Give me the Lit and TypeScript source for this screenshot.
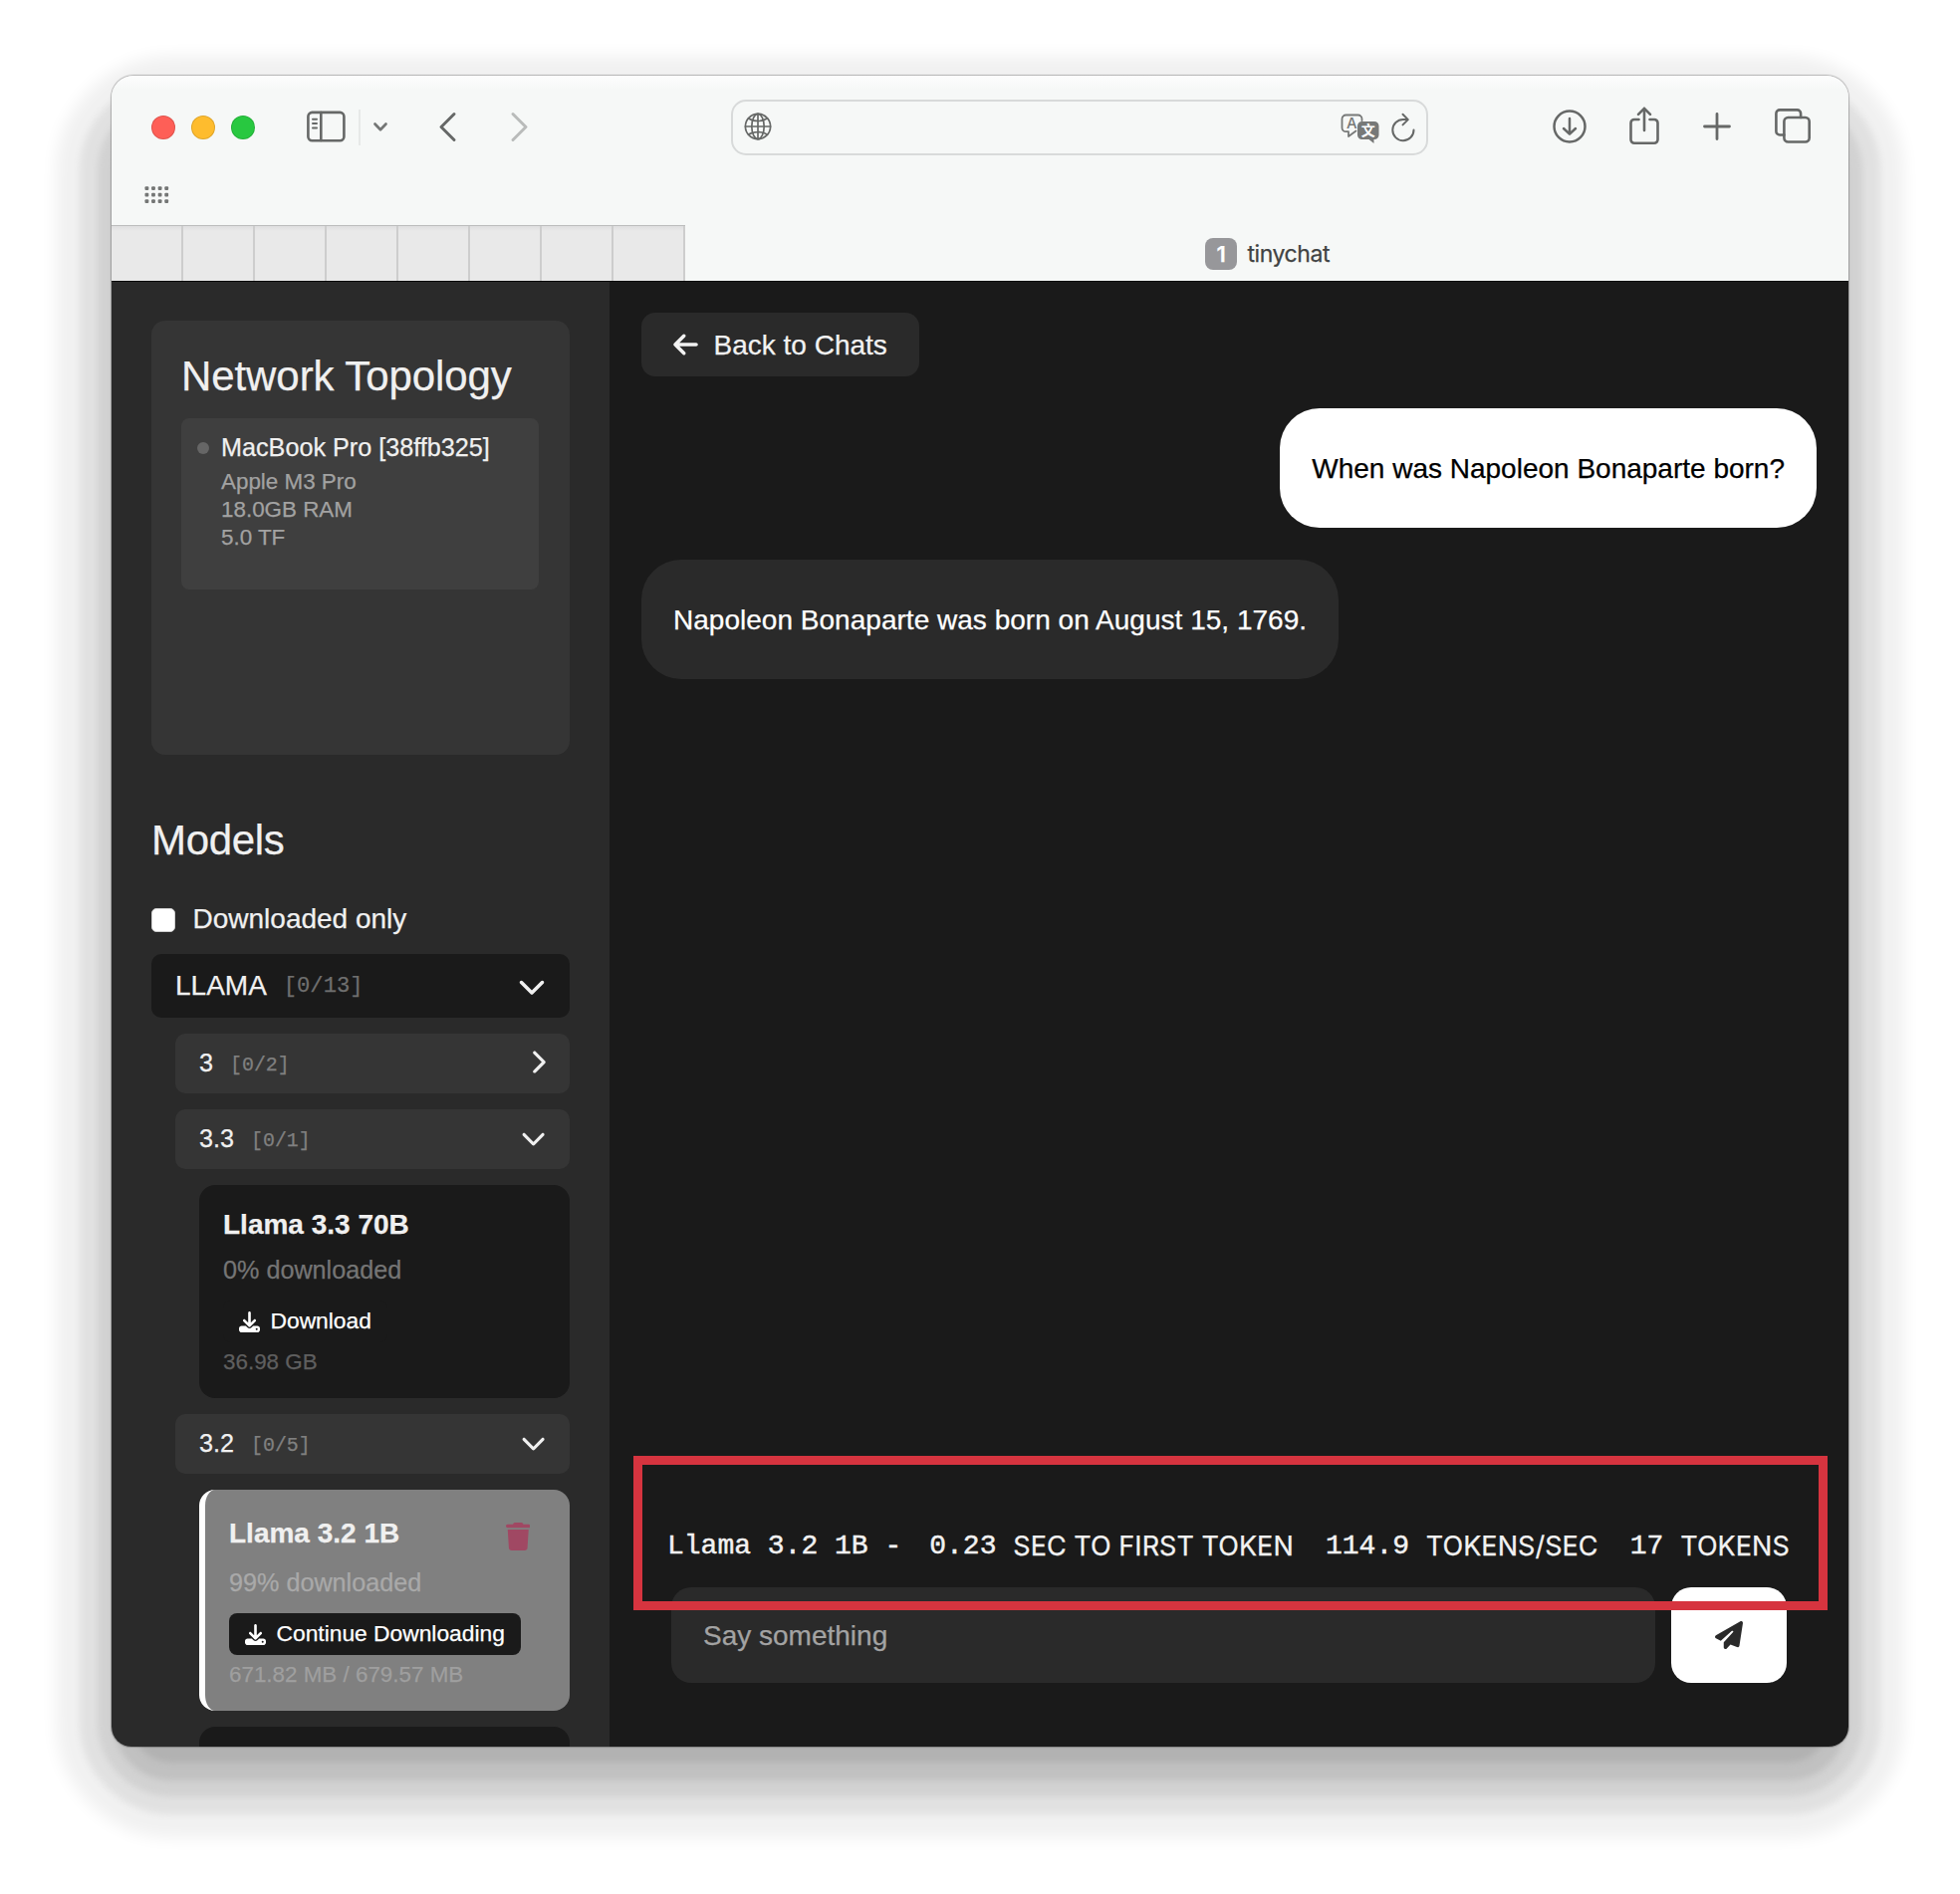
import { LitElement, html, css, svg, nothing } from "lit";
import { customElement, property } from "lit/decorators.js";

/* Solid glyphs used inside the chat page: [viewBox, path] */
const GLYPHS: Record<string, [string, string]> = {
  arrowLeft: ["0 0 448 512", "M9.4 233.4c-12.5 12.5-12.5 32.8 0 45.3l160 160c12.5 12.5 32.8 12.5 45.3 0s12.5-32.8 0-45.3L109.2 288 416 288c17.7 0 32-14.3 32-32s-14.3-32-32-32l-306.7 0L214.6 118.6c12.5-12.5 12.5-32.8 0-45.3s-32.8-12.5-45.3 0l-160 160z"],
  down: ["0 0 512 512", "M233.4 406.6c12.5 12.5 32.8 12.5 45.3 0l192-192c12.5-12.5 12.5-32.8 0-45.3s-32.8-12.5-45.3 0L256 338.7 86.6 169.4c-12.5-12.5-32.8-12.5-45.3 0s-12.5 32.8 0 45.3l192 192z"],
  right: ["0 0 320 512", "M310.6 233.4c12.5 12.5 12.5 32.8 0 45.3l-192 192c-12.5 12.5-32.8 12.5-45.3 0s-12.5-32.8 0-45.3L242.7 256 73.4 86.6c-12.5-12.5-12.5-32.8 0-45.3s32.8-12.5 45.3 0l192 192z"],
  download: ["0 0 512 512", "M288 32c0-17.7-14.3-32-32-32s-32 14.3-32 32V274.7l-73.4-73.4c-12.5-12.5-32.8-12.5-45.3 0s-12.5 32.8 0 45.3l128 128c12.5 12.5 32.8 12.5 45.3 0l128-128c12.5-12.5 12.5-32.8 0-45.3s-32.8-12.5-45.3 0L288 274.7V32zM64 352c-35.3 0-64 28.7-64 64v32c0 35.3 28.7 64 64 64H448c35.3 0 64-28.7 64-64V416c0-35.3-28.7-64-64-64H346.5l-45.3 45.3c-25 25-65.5 25-90.5 0L165.5 352H64zm368 56a24 24 0 1 1 0 48 24 24 0 1 1 0-48z"],
  trash: ["0 0 448 512", "M135.2 17.7L128 32H32C14.3 32 0 46.3 0 64S14.3 96 32 96H416c17.7 0 32-14.3 32-32s-14.3-32-32-32H320l-7.2-14.3C307.4 6.8 296.3 0 284.2 0H163.8c-12.1 0-23.2 6.8-28.6 17.7zM416 128H32L53.2 467c1.6 25.3 22.6 45 47.9 45H346.9c25.3 0 46.3-19.7 47.9-45L416 128z"],
  plane: ["0 0 512 512", "M498.1 5.6c10.1 7 15.4 19.1 13.5 31.2l-64 416c-1.5 9.7-7.4 18.2-16 23s-18.9 5.4-28 1.6L284 427.7l-68.5 74.1c-8.9 9.7-22.9 12.9-35.2 8.1S160 493.2 160 480V396.4c0-4 1.5-7.8 4.2-10.7L331.8 202.8c5.8-6.3 5.6-16-.4-22s-15.7-6.4-22-.7L106 360.8 17.7 316.6C7.1 311.3 .3 300.7 0 288.9s5.9-22.8 16.1-28.7l448-256c10.7-6.1 23.9-5.5 34 1.4z"],
};

const glyph = (name: string, cls: string) => html`
  <svg class=${cls} viewBox=${GLYPHS[name][0]} fill="currentColor"><path d=${GLYPHS[name][1]}></path></svg>`;

@customElement("browser-chrome")
class BrowserChrome extends LitElement {
  static styles = css`
    :host { display: block; height: 206px; background: linear-gradient(#fdfdfd, #f6f8f7 14px); font-family: Inter, "Liberation Sans", sans-serif; }
    svg { display: block; flex: none; fill: none; stroke: #666867; stroke-linecap: round; stroke-linejoin: round; overflow: visible; }
    .toolbar { display: flex; align-items: center; height: 104px; padding: 0 38px 0 40px; }
    .lights { display: flex; gap: 16px; margin-right: 52px; }
    .light { width: 24px; height: 24px; border-radius: 50%; box-sizing: border-box; border: 1px solid rgba(0, 0, 0, 0.12); }
    .red { background: #fe5f57; }
    .amber { background: #febc2e; }
    .green { background: #28c840; }
    .sep { width: 2px; height: 36px; background: #e7e9e8; margin: 0 13px; }
    .side { width: 39px; height: 32px; margin-top: -2px; stroke-width: 2.6; }
    .caret { width: 14px; height: 9px; stroke-width: 2.7; stroke: #747675; margin-top: -1px; }
    .back { width: 17px; height: 29px; margin: -2px 0 0 52px; stroke-width: 3; }
    .fwd { width: 17px; height: 29px; margin: -2px 0 0 55px; stroke-width: 3; stroke: #b9bbba; }
    .url { display: flex; align-items: center; box-sizing: border-box; width: 700px; height: 56px; margin-left: 204px; padding: 0 11px 0 11px; border: 2px solid #d8dada; border-radius: 15px; }
    .globe { width: 28px; height: 28px; margin-right: auto; margin-top: -2px; stroke-width: 1.7; }
    .translate { width: 39px; height: 30px; margin-right: 12px; margin-top: 1px; }
    .reload { width: 24px; height: 28px; margin-top: 0; stroke-width: 2; }
    .dl { width: 34px; height: 34px; margin-left: auto; margin-top: -2px; stroke-width: 2.5; }
    .share { width: 30px; height: 38px; margin-left: 43px; margin-top: -4px; stroke-width: 2.6; }
    .plus { width: 28px; height: 28px; margin-left: 44px; margin-top: -3px; stroke-width: 2.8; }
    .tabs { width: 36px; height: 35px; margin-left: 44px; margin-top: -3px; stroke-width: 2.6; }
    .favs { height: 46px; box-sizing: border-box; padding: 7px 0 0 33px; }
    .dots { width: 25px; height: 18px; fill: #747675; stroke: none; }
    .strip { display: flex; height: 56px; }
    .pinned { display: flex; width: 576px; box-sizing: border-box; background: linear-gradient(#dededf, #e9e9e9 5px); border-top: 1px solid #bcbdbd; }
    .pin { width: 72px; box-sizing: border-box; border-right: 2px solid #cdcdcd; }
    .active { flex: 1; display: flex; align-items: center; justify-content: center; gap: 10.5px; padding: 2px 0 0 1px; box-sizing: border-box; }
    .badge { width: 32px; height: 32px; border-radius: 8px; background: #97979a; color: #fff; font-size: 22px; font-weight: 600; line-height: 33px; text-align: center; }
    .title { font-size: 23px; line-height: 30px; letter-spacing: -0.45px; color: #414343; -webkit-text-stroke: 0.25px; }
    .a { font: 500 15px/1 Inter, sans-serif; fill: #777978; stroke: none; }
    .b { font: 700 14px/1 "Noto Sans CJK SC", sans-serif; fill: #fff; stroke: none; }
  `;

  render() {
    const rows = [0, 1, 2], cols = [0, 1, 2, 3];
    return html`
      <div class="toolbar">
        <div class="lights"><div class="light red"></div><div class="light amber"></div><div class="light green"></div></div>
        <svg class="side" viewBox="0 0 39 32">
          <rect x="1.4" y="1.9" width="36" height="28.4" rx="4"></rect><path d="M14.3 2v28"></path>
          <path stroke-width="2" d="M6 8.800h4M6 13.100h4M6 17.400h4"></path>
        </svg>
        <div class="sep"></div>
        <svg class="caret" viewBox="0 0 14 9"><path d="M1.500 1.500 7 7.200l5.500-5.700"></path></svg>
        <svg class="back" viewBox="0 0 17 29"><path d="M15 1.500 2 14.500 15 27.500"></path></svg>
        <svg class="fwd" viewBox="0 0 17 29"><path d="M2 1.500 15 14.500 2 27.500"></path></svg>
        <div class="url">
          <svg class="globe" viewBox="0 0 28 28">
            <circle cx="14" cy="14" r="12.600"></circle><ellipse cx="14" cy="14" rx="6.200" ry="12.600"></ellipse>
            <path d="M14 1.400v25.200M1.400 14h25.200M4.500 5.800c5 3.600 14 3.600 19 0M4.500 22.200c5-3.600 14-3.600 19 0"></path>
          </svg>
          <svg class="translate" viewBox="0 0 39 30">
            <path stroke="#777978" stroke-width="1.800" d="M15.500 17.500 8 23v-4.800H5.500a4 4 0 0 1-4-4V5.500a4 4 0 0 1 4-4h12a4 4 0 0 1 4 4V7"></path>
            <path fill="#777978" stroke="none" d="M21.500 8H34a4.500 4.500 0 0 1 4.500 4.500v9A4.500 4.500 0 0 1 34 26h-.5v4l-5-4h-7a4.500 4.500 0 0 1-4.500-4.500v-9A4.500 4.500 0 0 1 21.500 8z"></path>
            <text class="a" x="6" y="15.300">A</text><text class="b" x="20.700" y="22.300">文</text>
          </svg>
          <svg class="reload" viewBox="0 0 24 28"><path d="M22.500 16.500A10.600 10.600 0 1 1 12 6h4.500M11.500.8l5.300 5.300-5.300 5.300"></path></svg>
        </div>
        <svg class="dl" viewBox="0 0 34 34"><circle cx="17" cy="17" r="15.500"></circle><path d="M17 9v15.500M11 19l6 5.700 6-5.700"></path></svg>
        <svg class="share" viewBox="0 0 30 38"><path d="M9.500 13H5a3.500 3.500 0 0 0-3.500 3.500v16.800A3.500 3.500 0 0 0 5 36.800h20a3.500 3.500 0 0 0 3.500-3.500V16.500A3.500 3.500 0 0 0 25 13h-4.500M15 24V1.800M9 7.800l6-6 6 6"></path></svg>
        <svg class="plus" viewBox="0 0 28 28"><path d="M14 1.500v25M1.500 14h25"></path></svg>
        <svg class="tabs" viewBox="0 0 36 35"><rect x="9.400" y="9" width="25.300" height="24.500" rx="4"></rect><path d="M9.400 26.500H5a3.600 3.600 0 0 1-3.600-3.600V5A3.600 3.600 0 0 1 5 1.400h17.500A3.600 3.600 0 0 1 26.100 5v4"></path></svg>
      </div>
      <div class="favs">
        <svg class="dots" viewBox="0 0 25 18">
          ${rows.map((r) => cols.map((c) => svg`<rect x=${0.5 + c * 6.6} y=${0.3 + r * 6.5} width="3.800" height="3.800" rx="1"></rect>`))}
        </svg>
      </div>
      <div class="strip">
        <div class="pinned">${Array.from({ length: 8 }, () => html`<div class="pin"></div>`)}</div>
        <div class="active"><div class="badge">1</div><div class="title">tinychat</div></div>
      </div>`;
  }
}

interface Model {
  name: string;
  percent: string;
  action: string;
  size: string;
  selected?: boolean;
}

@customElement("model-card")
class ModelCard extends LitElement {
  @property({ attribute: false }) model!: Model;

  static styles = css`
    :host { display: block; margin-left: 48px; }
    .card { padding: 24px; border-radius: 16px; background: #1a1a1a; }
    .card.selected { background: #808080; border-left: 6px solid #fff; }
    .head { display: flex; justify-content: space-between; align-items: center; height: 32px; }
    .selected .head { height: 40px; }
    .name { font-size: 28px; line-height: 32px; font-weight: 700; color: #f0f0f0; }
    .trash { display: block; width: 24.5px; height: 28px; margin: 6px 16px 0 0; color: #a04863; }
    .percent { margin-top: 16px; font-size: 25.2px; line-height: 27px; color: #757575; }
    .size { margin-top: 8px; font-size: 22.4px; line-height: 24px; color: #5f5f5f; }
    .selected .percent { color: #a9a9a9; }
    .selected .size { color: #9f9f9f; }
    .button { display: inline-flex; align-items: center; gap: 10.5px; height: 42px; box-sizing: border-box; margin-top: 17px; padding: 0 16px 2px; border-radius: 8px; background: #1a1a1a; color: #fff; font-size: 22.8px; line-height: 40px; vertical-align: top; }
    .icon { width: 21px; height: 21px; margin-top: 3px; }
  `;

  render() {
    const m = this.model;
    return html`
      <div class=${m.selected ? "card selected" : "card"}>
        <div class="head"><span class="name">${m.name}</span>${m.selected ? glyph("trash", "trash") : nothing}</div>
        <div class="percent">${m.percent}</div>
        <div class="button">${glyph("download", "icon")}<span>${m.action}</span></div>
        <div class="size">${m.size}</div>
      </div>`;
  }
}

@customElement("side-panel")
class SidePanel extends LitElement {
  static styles = css`
    :host { display: block; width: 500px; box-sizing: border-box; padding: 40px; background: #2a2a2a; color: #f0f0f0; overflow: hidden; box-shadow: inset 0 1px 0 #000; }
    .topology { box-sizing: border-box; height: 436px; padding: 31px 31px 30px 30px; border-radius: 14px; background: #353535; }
    h2 { margin: 0; font-size: 42px; line-height: 50px; font-weight: 400; letter-spacing: -0.08px; }
    .node { display: flex; gap: 12px; box-sizing: border-box; height: 172px; margin-top: 17px; padding: 14px 16px; border-radius: 8px; background: #3f3f3f; }
    .dot { width: 12px; height: 12px; margin-top: 10px; border-radius: 50%; background: #666; }
    .node-name { font-size: 25.2px; line-height: 30px; margin-bottom: 6px; color: #f0f0f0; }
    .spec { font-size: 22.4px; line-height: 28px; color: #a2a2a2; }
    .models { margin-top: 61px; letter-spacing: -0.35px; }
    .filter { display: flex; align-items: center; gap: 17.5px; height: 36px; margin: 36px 0 17px; font-size: 28px; }
    .check { width: 24px; height: 24px; margin-top: 1px; box-sizing: border-box; border-radius: 5px; background: #fff; border: 1px solid #cfcfcf; }
    .tree { display: flex; flex-direction: column; gap: 16px; }
    .row { display: flex; align-items: center; gap: 17px; box-sizing: border-box; height: 60px; margin-left: 24px; padding: 0 24px; border-radius: 10px; background: #353535; font-size: 25.2px; }
    .row.root { height: 64px; margin-left: 0; background: #1a1a1a; font-size: 28px; }
    .label { margin-top: -2px; }
    .root .label { margin-top: 0; }
    .count { flex: 1; margin-top: 2px; font-family: "Liberation Mono", monospace; font-size: 0.79em; color: #808080; }
    .root .count { margin-top: 0; color: #6f6f6f; }
    .chev, .chev-right { width: 1em; height: 1em; }
    .chev { margin-top: -2px; }
    .root .chev { margin-top: 0; }
    .chev-right { width: 0.625em; margin-top: -3px; }
    .next { height: 200px; margin-left: 48px; border-radius: 16px; background: #1a1a1a; }
  `;

  private row(label: string, count: string, open: boolean, root = false) {
    return html`
      <div class=${root ? "row root" : "row"}>
        <span class="label">${label}</span><span class="count">${count}</span>
        ${open ? glyph("down", "chev") : glyph("right", "chev-right")}
      </div>`;
  }

  render() {
    return html`
      <div class="topology">
        <h2>Network Topology</h2>
        <div class="node">
          <div class="dot"></div>
          <div>
            <div class="node-name">MacBook Pro [38ffb325]</div>
            <div class="spec">Apple M3 Pro</div>
            <div class="spec">18.0GB RAM</div>
            <div class="spec">5.0 TF</div>
          </div>
        </div>
      </div>
      <h2 class="models">Models</h2>
      <div class="filter"><div class="check"></div><span>Downloaded only</span></div>
      <div class="tree">
        ${this.row("LLAMA", "[0/13]", true, true)}
        ${this.row("3", "[0/2]", false)}
        ${this.row("3.3", "[0/1]", true)}
        <model-card .model=${{ name: "Llama 3.3 70B", percent: "0% downloaded", action: "Download", size: "36.98 GB" }}></model-card>
        ${this.row("3.2", "[0/5]", true)}
        <model-card .model=${{ name: "Llama 3.2 1B", percent: "99% downloaded", action: "Continue Downloading", size: "671.82 MB / 679.57 MB", selected: true }}></model-card>
        <div class="next"></div>
      </div>`;
  }
}

@customElement("chat-view")
class ChatView extends LitElement {
  static styles = css`
    :host { display: flex; flex-direction: column; flex: 1; box-sizing: border-box; padding: 32px 32px 64px; background: #1a1a1a; color: #f2f2f2; font-size: 28px; box-shadow: inset 0 1px 0 #000; }
    .back { display: flex; align-items: center; gap: 15.5px; align-self: flex-start; height: 64px; box-sizing: border-box; padding: 1px 32px 0; border-radius: 14px; background: #2a2a2a; }
    .arrow { width: 25px; height: 28px; margin-top: -2px; }
    .bubble { display: flex; align-items: center; height: 120px; box-sizing: border-box; margin-top: 32px; padding: 2px 32px 0; border-radius: 40px; }
    .user { align-self: flex-end; background: #fff; color: #000; }
    .bot { align-self: flex-start; background: #2a2a2a; color: #fff; letter-spacing: 0.02px; }
    .stats { display: flex; align-items: center; height: 40px; margin: auto 0 21.5px 26px; white-space: pre; }
    .mono { font-family: "Liberation Mono", monospace; -webkit-text-stroke: 0.45px; }
    .unit { margin-left: 16.8px; font-family: Inter, "Liberation Sans", sans-serif; font-size: 27px; letter-spacing: 0.05px; }
    .first { margin-left: 28px; }
    .later { margin-left: 32.2px; }
    .form { display: flex; gap: 16px; margin: 0 30px; }
    .input { flex: 1; display: flex; align-items: center; height: 96px; box-sizing: border-box; padding: 1px 32px 0; border-radius: 20px; background: #2a2a2a; color: #a3a3a3; }
    .send { display: flex; align-items: center; justify-content: center; width: 116px; height: 96px; border-radius: 20px; background: #fff; color: #2a2a2a; }
    .plane { width: 28px; height: 28px; margin: 0 1px 0 0; }
  `;

  render() {
    return html`
      <div class="back">${glyph("arrowLeft", "arrow")}<span>Back to Chats</span></div>
      <div class="bubble user">When was Napoleon Bonaparte born?</div>
      <div class="bubble bot">Napoleon Bonaparte was born on August 15, 1769.</div>
      <div class="stats">
        <span class="mono">Llama 3.2 1B -</span>
        <span class="mono first">0.23</span><span class="unit">SEC TO FIRST TOKEN</span>
        <span class="mono later">114.9</span><span class="unit">TOKENS/SEC</span>
        <span class="mono later">17</span><span class="unit">TOKENS</span>
      </div>
      <div class="form">
        <div class="input">Say something</div>
        <div class="send">${glyph("plane", "plane")}</div>
      </div>`;
  }
}

@customElement("app-root")
class AppRoot extends LitElement {
  static styles = css`
    :host { display: block; width: 1968px; height: 1902px; box-sizing: border-box; padding: 76px 112px 148px; background: #fff; overflow: hidden; font-family: "Liberation Sans", Arial, sans-serif; -webkit-text-stroke: 0.25px; }
    .shell { position: relative; height: 1678px; border-radius: 22px 22px 20px 20px; }
    /* Stepped drop shadow, from the darkest band outwards */
    .shadow {
      position: absolute; inset: 0; border-radius: 60px;
      box-shadow:
        0 36px 6px -20px #b2b2b2,
        0 36px 6px -2px #c1c1c1,
        0 36px 6px 14px #d2d2d2,
        0 36px 7px 32px #e1e1e1,
        0 36px 16px 56px #f1f1f1;
    }
    .edge { position: absolute; inset: 0; border-radius: inherit; box-shadow: 0 0 1px 1px rgba(0, 0, 0, 0.25); }
    .window { position: relative; display: flex; flex-direction: column; height: 100%; border-radius: inherit; overflow: hidden; }
    .page { display: flex; flex: 1; min-height: 0; }
    .highlight { position: absolute; left: 524px; top: 1386px; width: 1199px; height: 155px; box-sizing: border-box; border: 9.5px solid #d6343f; }
  `;

  render() {
    return html`
      <div class="shell">
        <div class="shadow"></div>
        <div class="edge"></div>
        <div class="window">
          <browser-chrome></browser-chrome>
          <div class="page"><side-panel></side-panel><chat-view></chat-view></div>
        </div>
        <div class="highlight"></div>
      </div>`;
  }
}
